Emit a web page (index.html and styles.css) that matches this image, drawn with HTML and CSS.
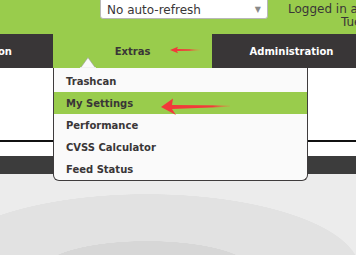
FILE: index.html
```html
<!DOCTYPE html>
<html>
<head>
    <title>Extras</title>
    <link rel="stylesheet" href="styles.css">
</head>
<body>
<div class="page">
    <div class="header">
        <div class="refresh-select">
            <span>No auto-refresh</span>
            <span class="caret">&#9660;</span>
        </div>
        <div class="login">
            <div>Logged in as Admin admin | Logout</div>
            <div class="date">Tue Oct 10 14:02:11 2023</div>
        </div>
    </div>

    <div class="nav">
        <div class="tab">Configuration</div>
        <div class="tab active">
            Extras
            <div class="menu">
                <svg class="menu-tip" width="16" height="11" viewBox="0 0 16 11">
                    <polygon points="0.5,11 8,0.6 15.5,11" fill="#fafafa" stroke="#9a9a9a" stroke-width="0.6"/>
                    <line x1="0" y1="10.8" x2="16" y2="10.8" stroke="#fafafa" stroke-width="1"/>
                </svg>
                <div class="menu-item">Trashcan</div>
                <div class="menu-item selected">My Settings</div>
                <div class="menu-item">Performance</div>
                <div class="menu-item">CVSS Calculator</div>
                <div class="menu-item">Feed Status</div>
            </div>
        </div>
        <div class="tab">Administration</div>
    </div>

    <div class="content">
        <div class="content-white"></div>
        <div class="rule"></div>
        <div class="content-gap"></div>
        <div class="toolbar"></div>
        <div class="backdrop"></div>
    </div>

    <!-- annotation arrows -->
    <svg class="arrow arrow-nav" width="31" height="8" viewBox="0 0 31 8">
        <defs>
            <linearGradient id="fadeA" x1="0" x2="1" y1="0" y2="0">
                <stop offset="0" stop-color="#f23a3a"/>
                <stop offset="0.65" stop-color="#f23a3a"/>
                <stop offset="1" stop-color="#d9a040" stop-opacity="0.4"/>
            </linearGradient>
        </defs>
        <polygon points="1,4 9,0.8 8,3 31,3.5 31,4.5 8,5 9,7.2" fill="url(#fadeA)"/>
    </svg>
    <svg class="arrow arrow-menu" width="70" height="19" viewBox="0 0 70 19">
        <defs>
            <linearGradient id="fadeB" x1="0" x2="1" y1="0" y2="0">
                <stop offset="0" stop-color="#f23a3a"/>
                <stop offset="0.75" stop-color="#f23a3a"/>
                <stop offset="1" stop-color="#e08a40" stop-opacity="0.3"/>
            </linearGradient>
        </defs>
        <polygon points="1,10 13,1.5 12,8 70,8.6 70,9.8 12,12 16,18" fill="url(#fadeB)"/>
    </svg>
</div>
</body>
</html>
```

FILE: styles.css
```css
body {
    font-family: "DejaVu Sans", Verdana, sans-serif;
    margin: 0;
    padding: 0;
    background-color: #ececec;
    overflow: hidden;
}

.page {
    position: relative;
    width: 356px;
    height: 255px;
    overflow: hidden;
}

.header {
    display: flex;
    height: 34px;
    background-color: #99cc4c;
    color: #393637;
}

.refresh-select {
    display: flex;
    flex: none;
    justify-content: space-between;
    box-sizing: border-box;
    width: 168px;
    height: 23px;
    margin-top: -4px;
    margin-left: 100px;
    padding: 4px 6px 0 6px;
    background-color: #fff;
    border: 1px solid #b8b8b8;
    border-radius: 3px;
    font-size: 12px;
    line-height: 18px;
    color: #393637;
    white-space: nowrap;
}

.caret {
    font-size: 8px;
    color: #8a8a8a;
}

.login {
    flex: none;
    margin-left: 20px;
    padding-top: 3px;
    font-size: 12px;
    line-height: 13px;
    white-space: nowrap;
}

.date {
    margin-left: 53px;
}

.nav {
    display: flex;
    height: 34px;
    margin-left: -106px;
    background-color: #393637;
}

.tab {
    position: relative;
    flex: 0 0 159px;
    box-sizing: border-box;
    height: 34px;
    padding-top: 1px;
    text-align: center;
    font-size: 10px;
    font-weight: bold;
    line-height: 34px;
    color: #fff;
    white-space: nowrap;
}

.tab.active {
    background-color: #99cc4c;
    color: #393637;
}

.menu {
    position: absolute;
    top: 34px;
    left: 0;
    z-index: 2;
    box-sizing: border-box;
    width: 255px;
    padding-top: 2px;
    background-color: #fafafa;
    border: 1px solid #3f3c3d;
    border-top: none;
    border-radius: 0 0 6px 6px;
    text-align: left;
}

.menu-tip {
    position: absolute;
    top: -11px;
    left: 26px;
}

.menu-item {
    box-sizing: border-box;
    height: 22px;
    padding-top: 1px;
    padding-left: 12px;
    line-height: 22px;
    color: #393637;
    overflow: hidden;
}

.menu-item.selected {
    background-color: #99cc4c;
}

.content-white {
    height: 72px;
    background-color: #fff;
}

.rule {
    height: 2px;
    background-color: #111;
}

.content-gap {
    height: 14px;
    background-color: #fff;
}

.toolbar {
    height: 18px;
    background-color: #3c3c3c;
}

.backdrop {
    height: 81px;
    background:
        radial-gradient(105px 29px at 147px 96px, #d7d7d7 99%, transparent 100%),
        radial-gradient(213px 76px at 147px 96px, #e2e2e2 99.5%, transparent 100%),
        #ececec;
}

.arrow {
    position: absolute;
    z-index: 3;
}

.arrow-nav {
    left: 169px;
    top: 46px;
}

.arrow-menu {
    left: 160px;
    top: 97px;
}
```
